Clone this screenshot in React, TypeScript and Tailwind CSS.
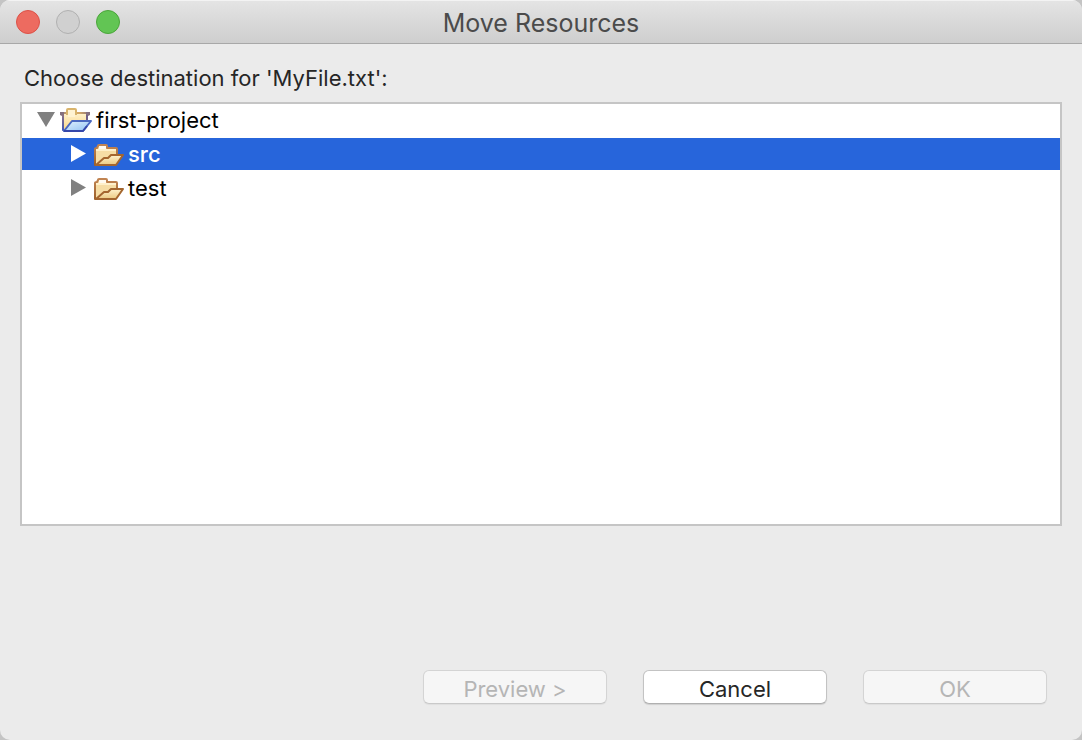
import { useState } from "react";

type Node = { id: string; label: string; kind: "project" | "folder"; children?: Node[] };

const tree: Node[] = [
  {
    id: "first-project",
    label: "first-project",
    kind: "project",
    children: [
      { id: "src", label: "src", kind: "folder" },
      { id: "test", label: "test", kind: "folder" },
    ],
  },
];

function ProjectIcon() {
  return (
    <svg className="h-8 w-8 shrink-0" viewBox="0 0 32 32" fill="none" aria-hidden="true">
      <defs>
        <linearGradient id="projectBack" x1="0" y1="0" x2="0" y2="1">
          <stop offset="0" stopColor="#fff0c8" />
          <stop offset="1" stopColor="#f8d584" />
        </linearGradient>
        <linearGradient id="projectFront" x1="0" y1="0" x2="1" y2="1">
          <stop offset="0" stopColor="#e2f2fd" />
          <stop offset="1" stopColor="#8fc0f3" />
        </linearGradient>
        <linearGradient id="projectEdge" x1="0" y1="0" x2="0" y2="1">
          <stop offset="0" stopColor="#8d7282" />
          <stop offset="1" stopColor="#3f57b5" />
        </linearGradient>
        <linearGradient id="projectBar" x1="0" y1="0" x2="1" y2="0">
          <stop offset="0" stopColor="#85717f" />
          <stop offset="0.25" stopColor="#d3a766" />
          <stop offset="0.65" stopColor="#d3a766" />
          <stop offset="1" stopColor="#85717f" />
        </linearGradient>
      </defs>
      <path d="M3 10H27V19L8 27H3Z" fill="url(#projectBack)" />
      <path d="M0 8H30V10H0Z" fill="url(#projectBar)" />
      <path d="M0 8H4V12H2L0 11ZM26 8H30V11L28 12H26Z" fill="#85717f" />
      <path d="M7 11V6Q7 5 8 5H15Q16 5 16 6V11" fill="#fff3d2" stroke="#d9b46c" strokeWidth="2" />
      <path d="M8 9H15V13H8Z" fill="#fff3d2" />
      <path d="M3 11V26L5 27" stroke="url(#projectEdge)" strokeWidth="2" />
      <path d="M27 11V18" stroke="#705f87" strokeWidth="2" />
      <path
        d="M12 17H31L23 27H4Z"
        fill="url(#projectFront)"
        stroke="#4a68c0"
        strokeWidth="2"
        strokeLinejoin="round"
      />
      <path d="M4 27H23L27 22" stroke="#3547aa" strokeWidth="2" strokeLinejoin="round" />
    </svg>
  );
}

function FolderIcon() {
  return (
    <svg className="h-8 w-8 shrink-0" viewBox="0 0 32 32" fill="none" aria-hidden="true">
      <defs>
        <linearGradient id="folderFront" x1="0" y1="0" x2="0" y2="1">
          <stop offset="0" stopColor="#fff2cd" />
          <stop offset="1" stopColor="#ebc982" />
        </linearGradient>
        <linearGradient id="folderEdge" x1="0" y1="0" x2="0" y2="1">
          <stop offset="0" stopColor="#c18452" />
          <stop offset="1" stopColor="#9c602a" />
        </linearGradient>
      </defs>
      <path
        d="M3 27V11Q3 10 5 10L6 8Q6 7 7 7H14Q15 7 15 8V10H24Q25 10 25 11V18L8 27Z"
        fill="#f6dda5"
        stroke="url(#folderEdge)"
        strokeWidth="2"
        strokeLinejoin="round"
      />
      <path d="M7 8H14V12H7Z" fill="#fffaf0" />
      <path d="M4 12H24" stroke="#fff0ca" strokeWidth="2" />
      <path
        d="M4 27L12 20H16L19 17H31L24 27Z"
        fill="url(#folderFront)"
        stroke="#a4662f"
        strokeWidth="2"
        strokeLinejoin="round"
      />
    </svg>
  );
}

function Triangle({ open }: { open: boolean }) {
  return (
    <svg className="h-8 w-5" viewBox="0 0 20 32" fill="currentColor" aria-hidden="true">
      {open ? <path d="M1 8H19L10 23Z" /> : <path d="M3 7L18 15.5L3 24Z" />}
    </svg>
  );
}

export default function App() {
  const [open, setOpen] = useState<Record<string, boolean>>({ "first-project": true });
  const [selected, setSelected] = useState("src");

  const renderNode = (node: Node, nested: boolean) => {
    const isSelected = selected === node.id;
    const isOpen = !!open[node.id];
    return (
      <li key={node.id} role="treeitem" aria-expanded={isOpen} aria-selected={isSelected}>
        <div
          className={`flex h-8 items-center ${nested ? "pl-[46px]" : "pl-3.5"} ${
            isSelected ? "bg-[#2765db] font-medium text-white" : "text-black"
          }`}
        >
          <button
            type="button"
            aria-label={`Toggle ${node.label}`}
            className={`mr-1 ${isSelected ? "text-white" : "text-[#808080]"}`}
            onClick={() => setOpen({ ...open, [node.id]: !isOpen })}
          >
            <Triangle open={isOpen} />
          </button>
          <button
            type="button"
            className="flex flex-1 items-center gap-1 text-left"
            onClick={() => setSelected(node.id)}
          >
            {node.kind === "project" ? <ProjectIcon /> : <FolderIcon />}
            <span>{node.label}</span>
          </button>
        </div>
        {isOpen && node.children && (
          <ul role="group" className="mt-0.5 flex flex-col gap-0.5">
            {node.children.map((child) => renderNode(child, true))}
          </ul>
        )}
      </li>
    );
  };

  const buttonClass =
    "h-[34px] w-[184px] rounded-md border border-[#c3c3c3] border-b-[#b0b0b0] bg-white pt-0.5 text-[#262626] shadow-[0_1px_1px_rgba(0,0,0,0.12)] disabled:border-[#d4d4d4] disabled:border-b-[#c9c9c9] disabled:bg-[#f6f6f6] disabled:text-[#b5b5b5] disabled:shadow-[0_1px_1px_rgba(0,0,0,0.05)]";

  return (
    <div className="min-h-screen bg-[#c4c4c4] font-['Inter',sans-serif] text-[22px] leading-8">
      <div
        role="dialog"
        aria-labelledby="title"
        className="flex min-h-screen flex-col overflow-hidden rounded-[10px] bg-[#ebebeb]"
      >
        <header className="grid h-11 grid-cols-[1fr_auto_1fr] items-center border-t border-b border-t-[#f3f3f3] border-b-[#a8a8a8] bg-linear-to-b from-[#e4e4e4] to-[#cecece] px-4">
          <div className="flex gap-4">
            <button type="button" aria-label="Close" className="h-6 w-6 rounded-full border border-[#dc5147] bg-[#ed6b60]" />
            <button type="button" aria-label="Minimize" className="h-6 w-6 rounded-full border border-[#b0b0b0] bg-[#d0d0d0]" />
            <button type="button" aria-label="Zoom" className="h-6 w-6 rounded-full border border-[#4aa53a] bg-[#62c554]" />
          </div>
          <h1 id="title" className="pt-0.5 text-[25px] text-[#4b4b4b]">
            Move Resources
          </h1>
        </header>
        <main className="flex flex-1 flex-col px-5 pt-[18px] pb-9">
          <h2 id="prompt" className="px-1 text-[#262626]">
            Choose destination for 'MyFile.txt':
          </h2>
          <ul
            role="tree"
            aria-labelledby="prompt"
            className="mt-2 flex-1 border-2 border-[#c5c5c5] bg-white"
          >
            {tree.map((node) => renderNode(node, false))}
          </ul>
          <div className="mt-36 flex justify-end gap-9 pr-[15px]">
            <button type="button" disabled className={buttonClass}>
              Preview &gt;
            </button>
            <button type="button" className={buttonClass}>
              Cancel
            </button>
            <button type="button" disabled className={buttonClass}>
              OK
            </button>
          </div>
        </main>
      </div>
    </div>
  );
}
